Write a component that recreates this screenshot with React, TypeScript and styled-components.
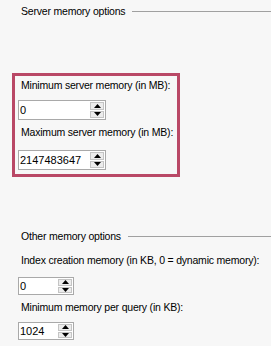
import styled, { createGlobalStyle } from "styled-components";

const GlobalStyle = createGlobalStyle`
    body {
        margin: 0;
        background-color: #f7f7f7;
        font-family: "Liberation Sans", Arial, sans-serif;
        font-size: 10.5px;
        letter-spacing: -0.2px;
        color: #000;
    }
`;

interface ISpinProps {
    value: string;
    width: number;
    height: number;
}

const Spin = ({ value, width, height }: ISpinProps) => {
    return (
        <SpinBox $width={width} $height={height}>
            <SpinValue>{value}</SpinValue>
            <SpinButtons>
                <SpinButton>
                    <svg width="7" height="4" viewBox="0 0 7 4">
                        <path d="M3.5 0 L7 4 L0 4 Z" fill="#000" />
                    </svg>
                </SpinButton>
                <SpinButton>
                    <svg width="7" height="4" viewBox="0 0 7 4">
                        <path d="M0 0 L7 0 L3.5 4 Z" fill="#000" />
                    </svg>
                </SpinButton>
            </SpinButtons>
        </SpinBox>
    );
};

const App = () => {
    return (
        <Page>
            <GlobalStyle />
            <SectionHeader>
                <SectionTitle>Server memory options</SectionTitle>
                <SectionLine />
            </SectionHeader>

            <Highlight>
                <Label $top={0} $bottom={7}>
                    Minimum server memory (in MB):
                </Label>
                <Spin value="0" width={88} height={20} />
                <Label $top={4} $bottom={10}>
                    Maximum server memory (in MB):
                </Label>
                <Spin value="2147483647" width={88} height={20} />
            </Highlight>

            <SectionHeader $top={51}>
                <SectionTitle>Other memory options</SectionTitle>
                <SectionLine />
            </SectionHeader>

            <Group>
                <Label $top={8} $bottom={9}>
                    Index creation memory (in KB, 0 = dynamic memory):
                </Label>
                <Spin value="0" width={56} height={18} />
                <Label $top={4} $bottom={7}>
                    Minimum memory per query (in KB):
                </Label>
                <Spin value="1024" width={56} height={18} />
            </Group>
        </Page>
    );
};

const Page = styled.div`
    width: 271px;
    height: 346px;
    overflow: hidden;
    padding-top: 3px;
    box-sizing: border-box;
`;

const SectionHeader = styled.div<{ $top?: number }>`
    display: flex;
    align-items: center;
    gap: 7px;
    height: 16px;
    padding-left: 21px;
    margin-top: ${(props) => props.$top ?? 0}px;
`;

const SectionTitle = styled.span`
    white-space: nowrap;
`;

const SectionLine = styled.div`
    flex: 1;
    height: 1px;
    background-color: #a0a0a0;
`;

const Highlight = styled.div`
    width: 168px;
    margin: 54px 0 0 12px;
    padding: 1px 3px 4px 3px;
    border: 3px solid #b94866;
    display: flex;
    flex-direction: column;
    box-sizing: border-box;
`;

const Group = styled.div`
    margin-left: 18px;
    display: flex;
    flex-direction: column;
`;

const Label = styled.div<{ $top: number; $bottom: number }>`
    height: 16px;
    line-height: 16px;
    padding-left: 3px;
    margin: ${(props) => props.$top}px 0 ${(props) => props.$bottom}px 0;
    white-space: nowrap;
`;

const SpinBox = styled.div<{ $width: number; $height: number }>`
    width: ${(props) => props.$width}px;
    height: ${(props) => props.$height}px;
    border: 1px solid #a9a9a9;
    background-color: #fff;
    box-sizing: border-box;
    display: flex;
    align-items: stretch;
    justify-content: space-between;
`;

const SpinValue = styled.span`
    padding-left: 1px;
    font-size: 11px;
    letter-spacing: 0;
    display: flex;
    align-items: center;
`;

const SpinButtons = styled.div`
    width: 14px;
    margin-right: 1px;
    display: flex;
    flex-direction: column;
    gap: 1px;
    padding: 1px 0;
`;

const SpinButton = styled.div`
    flex: 1;
    background-color: #ececec;
    border: 1px solid #c4c4c4;
    display: flex;
    align-items: center;
    justify-content: center;
`;

export default App;
